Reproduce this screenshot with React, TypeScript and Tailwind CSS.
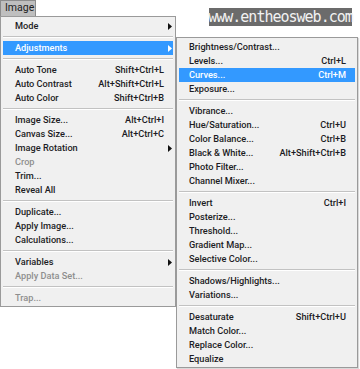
import React from 'react';

type Item =
  | { sep: true }
  | { label: string; shortcut?: string; sub?: boolean; disabled?: boolean; active?: boolean };

const imageMenu: Item[] = [
  { label: 'Mode', sub: true },
  { sep: true },
  { label: 'Adjustments', sub: true, active: true },
  { sep: true },
  { label: 'Auto Tone', shortcut: 'Shift+Ctrl+L' },
  { label: 'Auto Contrast', shortcut: 'Alt+Shift+Ctrl+L' },
  { label: 'Auto Color', shortcut: 'Shift+Ctrl+B' },
  { sep: true },
  { label: 'Image Size...', shortcut: 'Alt+Ctrl+I' },
  { label: 'Canvas Size...', shortcut: 'Alt+Ctrl+C' },
  { label: 'Image Rotation', sub: true },
  { label: 'Crop', disabled: true },
  { label: 'Trim...' },
  { label: 'Reveal All' },
  { sep: true },
  { label: 'Duplicate...' },
  { label: 'Apply Image...' },
  { label: 'Calculations...' },
  { sep: true },
  { label: 'Variables', sub: true },
  { label: 'Apply Data Set...', disabled: true },
  { sep: true },
  { label: 'Trap...', disabled: true },
];

const adjustMenu: Item[] = [
  { label: 'Brightness/Contrast...' },
  { label: 'Levels...', shortcut: 'Ctrl+L' },
  { label: 'Curves...', shortcut: 'Ctrl+M', active: true },
  { label: 'Exposure...' },
  { sep: true },
  { label: 'Vibrance...' },
  { label: 'Hue/Saturation...', shortcut: 'Ctrl+U' },
  { label: 'Color Balance...', shortcut: 'Ctrl+B' },
  { label: 'Black & White...', shortcut: 'Alt+Shift+Ctrl+B' },
  { label: 'Photo Filter...' },
  { label: 'Channel Mixer...' },
  { sep: true },
  { label: 'Invert', shortcut: 'Ctrl+I' },
  { label: 'Posterize...' },
  { label: 'Threshold...' },
  { label: 'Gradient Map...' },
  { label: 'Selective Color...' },
  { sep: true },
  { label: 'Shadows/Highlights...' },
  { label: 'Variations...' },
  { sep: true },
  { label: 'Desaturate', shortcut: 'Shift+Ctrl+U' },
  { label: 'Match Color...' },
  { label: 'Replace Color...' },
  { label: 'Equalize' },
];

const Arrow = ({ white }: { white?: boolean }) => (
  <svg width="4" height="7" viewBox="0 0 4 7">
    <polygon points="0,0 4,3.5 0,7" fill={white ? '#ffffff' : '#111111'} />
  </svg>
);

const MenuList = ({ items, left }: { items: Item[]; left: boolean }) => (
  <div className="flex flex-col">
    {items.map((it, i) => {
      if ('sep' in it) {
        return (
          <div key={i} className="h-[8px] mx-[2px] flex flex-col justify-center">
            <div className="h-[1px] bg-[#c2c2c2]" />
            <div className="h-[1px] bg-white" />
          </div>
        );
      }
      const color = it.active ? 'text-white' : it.disabled ? 'text-[#8e8e8e]' : 'text-[#1c1c24]';
      return (
        <div
          key={i}
          className={`h-[14px] mx-[2px] flex items-center ${left ? 'pl-[12px]' : 'pl-[10px]'} ${
            it.active ? 'bg-[#3399ff]' : ''
          } ${color}`}
        >
          <span className="flex-1 whitespace-nowrap">{it.label}</span>
          {it.shortcut && <span className="whitespace-nowrap">{it.shortcut}</span>}
          {left ? (
            <span className="w-[9px] flex justify-end pr-[1px]">{it.sub && <Arrow white={it.active} />}</span>
          ) : (
            <span className="w-[9px]" />
          )}
        </div>
      );
    })}
  </div>
);

export default function App() {
  return (
    <div
      className="w-[360px] h-[369px] bg-white flex items-start overflow-hidden text-[9.2px] font-medium leading-none"
      style={{ fontFamily: 'Roboto, "Liberation Sans", sans-serif' }}
    >
      {/* Image menu */}
      <div className="w-[176px] flex flex-col">
        <div className="w-[36px] h-[16px] bg-[#bfbfbf] border border-b-0 border-[#8c8c8c] flex items-center pl-[4px] text-[#222] text-[10.5px] font-normal">
          Image
        </div>
        <div className="bg-[#f0f0f0] border border-[#9a9a9a] pt-[2px] pb-[1px]">
          <MenuList items={imageMenu} left />
        </div>
      </div>

      {/* watermark + adjustments submenu */}
      <div className="w-[182px] flex flex-col">
        <div
          className="ml-[33px] w-[143px] h-[18px] mt-[8px] bg-[#6b6b6b] flex items-center justify-center text-[#f2f2f2] text-[15px] font-normal tracking-[-1px]"
          style={{ fontFamily: '"DejaVu Sans Mono", monospace' }}
        >
          www.entheosweb.com
        </div>
        <div className="mt-[11px] bg-[#f0f0f0] border border-[#9a9a9a] pt-[2px] pb-[1px] shadow-[1px_1px_1px_rgba(0,0,0,0.15)]">
          <MenuList items={adjustMenu} left={false} />
        </div>
      </div>
    </div>
  );
}
